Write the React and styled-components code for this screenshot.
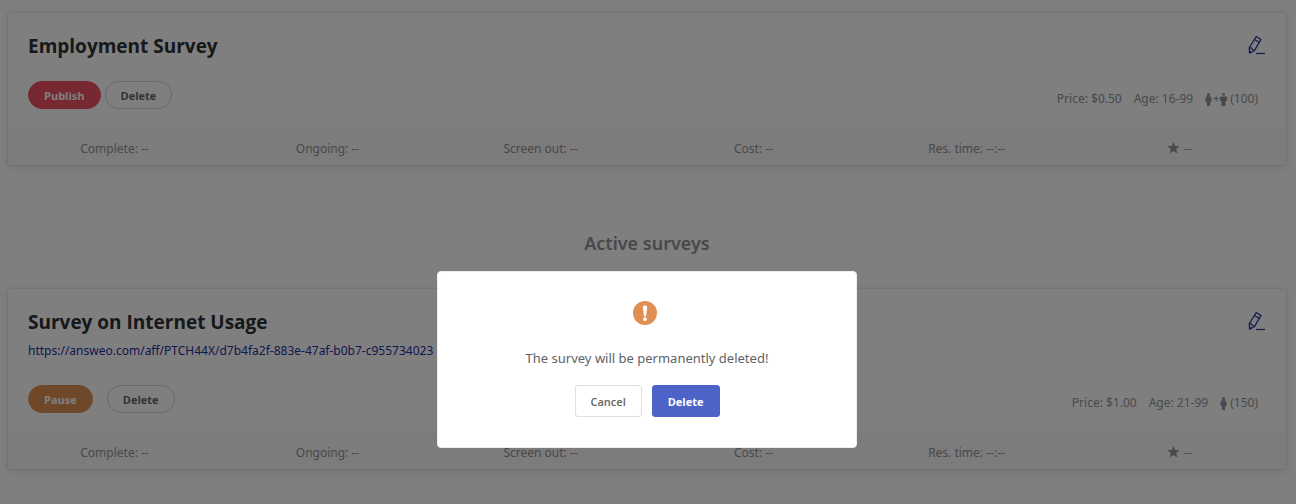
import styled, { createGlobalStyle } from "styled-components";

const surveys = [
  {
    id: 1,
    title: "Employment Survey",
    action: "Publish",
    price: "$0.50",
    age: "16-99",
    audience: ["female", "male"],
    count: 100,
  },
  {
    id: 2,
    title: "Survey on Internet Usage",
    link: "https://answeo.com/aff/PTCH44X/d7b4fa2f-883e-47af-b0b7-c955734023",
    action: "Pause",
    price: "$1.00",
    age: "21-99",
    audience: ["female"],
    count: 150,
  },
];

const PencilIcon = () => (
  <svg width="18" height="20" viewBox="0 0 18 20" fill="none" stroke="currentColor" strokeWidth="1.2">
    <path d="M8.2 1.6 L13 4.4 L6.6 15.4 L1.6 18.2 L1.2 12.8 Z" strokeLinejoin="round" />
    <path d="M6.4 4.5 L11.4 7.4" />
    <path d="M1.2 13 L3.4 12.8 L4.2 14.6 L6.5 15.3" />
    <path d="M1.4 16.4 L3 17.4" strokeWidth="1.6" />
    <path d="M8 18.5 H17" />
  </svg>
);

const FemaleIcon = () => (
  <svg width="7" height="13" viewBox="0 0 7 13" fill="currentColor">
    <circle cx="3.5" cy="1.6" r="1.6" />
    <path d="M1.4 3.2h4.2L7 7.4l-.8 1H5.6v1.4H5V13H2V9.8h-.6V8.4H.8L0 7.4z" />
  </svg>
);

const MaleIcon = () => (
  <svg width="7" height="13" viewBox="0 0 7 13" fill="currentColor">
    <circle cx="3.5" cy="1.4" r="1.4" />
    <path d="M.6 3.4h5.8l.6.6v4H5.5v5h-4V8H0V4z" />
  </svg>
);

const StarIcon = () => (
  <svg width="13" height="12" viewBox="0 0 13 12" fill="currentColor">
    <path d="M6.5 0l1.6 4.1 4.6.2-3.6 2.8 1.3 4.5-3.9-2.500-3.900 2.500 1.300-4.500L.3 4.300l4.600-.2z" />
  </svg>
);

const WarningIcon = () => (
  <svg width="24" height="24" viewBox="0 0 24 24">
    <circle cx="12" cy="12" r="12" fill="#df8f52" />
    <path d="M9.8 6.2c0-1.2 1-1.7 2.2-1.7s2.2.5 2.2 1.7l-1 8c-.1 1-.5 1.4-1.2 1.4s-1.1-.4-1.2-1.4z" fill="#fff" />
    <circle cx="12" cy="18.2" r="1.9" fill="#fff" />
  </svg>
);

const SurveyCard = ({ survey }) => {
  const { title, link, action, price, age, audience, count } = survey;

  return (
    <Card>
      <CardBody>
        <CardHeader>
          <div>
            <Title>{title}</Title>
            {link && <SurveyLink href={link}>{link}</SurveyLink>}
          </div>
          <EditButton type="button" aria-label="Edit survey">
            <PencilIcon />
          </EditButton>
        </CardHeader>
        <CardActions $spaced={Boolean(link)}>
          <Pills $spaced={Boolean(link)}>
            <Pill type="button" $variant={action}>
              {action}
            </Pill>
            <Pill type="button">Delete</Pill>
          </Pills>
          <Details>
            <span>Price: {price}</span>
            <span>Age: {age}</span>
            <Audience>
              <FemaleIcon />
              {audience.includes("male") && (
                <>
                  <Plus>+</Plus>
                  <MaleIcon />
                </>
              )}
              <Count>({count})</Count>
            </Audience>
          </Details>
        </CardActions>
      </CardBody>
      <Stats>
        <li>Complete: --</li>
        <li>Ongoing: --</li>
        <li>Screen out: --</li>
        <li>Cost: --</li>
        <li>Res. time: --:--</li>
        <li>
          <StarIcon /> --
        </li>
      </Stats>
    </Card>
  );
};

const App = () => {
  return (
    <>
      <GlobalStyle />
      <Page>
        <SurveyCard survey={surveys[0]} />
        <SectionTitle>Active surveys</SectionTitle>
        <SurveyCard survey={surveys[1]} />
      </Page>
      <Overlay>
        <Modal role="alertdialog" aria-modal="true" aria-labelledby="delete-message">
          <WarningIcon />
          <Message id="delete-message">The survey will be permanently deleted!</Message>
          <ModalActions>
            <ModalButton type="button">Cancel</ModalButton>
            <ModalButton type="button" $primary>
              Delete
            </ModalButton>
          </ModalActions>
        </Modal>
      </Overlay>
    </>
  );
};

const GlobalStyle = createGlobalStyle`
  * {
    box-sizing: border-box;
  }

  body {
    margin: 0;
    background-color: #fff;
    color: #8f9296;
    font-family: "Noto Sans", "Open Sans", sans-serif;
    font-size: 12px;
  }

  button {
    font-family: "Open Sans", "Noto Sans", sans-serif;
    cursor: pointer;
  }
`;

const Page = styled.main`
  padding: 13px 10px 34px 8px;
`;

const Card = styled.article`
  border-radius: 3px;
  background-color: #fff;
  box-shadow: 0 0 2px rgba(20, 20, 60, 0.2), 0 2px 10px rgba(0, 0, 0, 0.12);
`;

const CardBody = styled.div`
  padding: 20px;
`;

const CardHeader = styled.header`
  display: flex;
  justify-content: space-between;
  align-items: flex-start;
`;

const Title = styled.h2`
  margin: 0;
  color: #2e3033;
  font-family: "Open Sans", "Noto Sans", sans-serif;
  font-size: 19px;
  font-weight: 700;
  line-height: 26px;
`;

const SurveyLink = styled.a`
  display: block;
  margin-top: 6px;
  color: #1f2f9c;
  line-height: 20px;
  text-decoration: none;
`;

const EditButton = styled.button`
  display: flex;
  margin-top: 2px;
  padding: 0;
  border: 0;
  background: none;
  color: #27309a;
`;

const CardActions = styled.div`
  display: flex;
  justify-content: space-between;
  align-items: flex-start;
  margin-top: ${({ $spaced }) => ($spaced ? "24px" : "22px")};
`;

const Pills = styled.div`
  display: flex;
  gap: ${({ $spaced }) => ($spaced ? "14px" : "4px")};
`;

const pillColors = {
  Publish: "#ef5060",
  Pause: "#df8f52",
};

const Pill = styled.button`
  height: 28px;
  padding: 0 15px;
  border: 1px solid ${({ $variant }) => pillColors[$variant] || "#d4d5dc"};
  border-radius: 14px;
  background-color: ${({ $variant }) => pillColors[$variant] || "#fff"};
  color: ${({ $variant }) => ($variant ? "#fff" : "#65686c")};
  font-size: 11px;
  font-weight: 700;
`;

const Details = styled.div`
  display: flex;
  gap: 12px;
  margin-bottom: -8px;
  padding: 8px 8px 0 0;
  line-height: 20px;
`;

const Audience = styled.span`
  display: flex;
  align-items: center;

  svg {
    flex-shrink: 0;
  }
`;

const Plus = styled.span`
  width: 8px;
  text-align: center;
`;

const Count = styled.span`
  margin-left: 3px;
`;

const Stats = styled.ul`
  display: grid;
  grid-template-columns: repeat(6, 1fr);
  margin: 0;
  padding: 0;
  border-top: 1px solid #efeff2;
  border-radius: 0 0 3px 3px;
  background-color: #f8f8f9;
  list-style: none;

  li {
    display: flex;
    justify-content: center;
    align-items: center;
    gap: 4px;
    height: 35px;
    padding-top: 1px;
  }
`;

const SectionTitle = styled.h3`
  margin: 64px 0 32px;
  font-size: 18px;
  font-weight: 600;
  line-height: 28px;
  text-align: center;
`;

const Overlay = styled.div`
  position: fixed;
  inset: 0;
  display: flex;
  justify-content: center;
  align-items: flex-start;
  padding: 271px 10px 0 8px;
  background-color: rgba(0, 0, 0, 0.5);
`;

const Modal = styled.div`
  display: flex;
  flex-direction: column;
  align-items: center;
  width: 100%;
  max-width: 420px;
  padding: 29px 20px 30px;
  border: 1px solid #ebeef5;
  border-radius: 4px;
  background-color: #fff;

  svg {
    margin-right: 4px;
  }
`;

const Message = styled.p`
  margin: 22px 0 16px;
  color: #606266;
  font-size: 13px;
  line-height: 22px;
`;

const ModalActions = styled.div`
  display: flex;
  gap: 10px;
`;

const ModalButton = styled.button`
  height: 32px;
  padding: 0 15px;
  border: 1px solid ${({ $primary }) => ($primary ? "#4d63c8" : "#dcdfe6")};
  border-radius: 3px;
  background-color: ${({ $primary }) => ($primary ? "#4d63c8" : "#fff")};
  color: ${({ $primary }) => ($primary ? "#fff" : "#606266")};
  font-size: 11px;
  font-weight: ${({ $primary }) => ($primary ? 700 : 600)};
`;

export default App;
